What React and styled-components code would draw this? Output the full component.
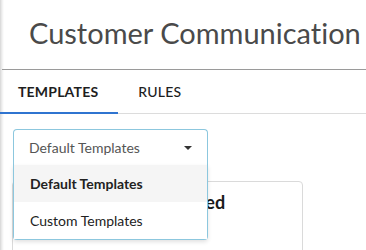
import React, { useState } from 'react';
import styled, { createGlobalStyle } from 'styled-components';

const GlobalStyle = createGlobalStyle`
	html, body {
		margin: 0;
		padding: 0;
		background: #fff;
		font-family: Lato, "Open Sans", sans-serif;
		font-variant-ligatures: none;
		overflow: hidden;
	}
`

const Page = styled.div`
	height: 250px;
	background: linear-gradient(to right, #d6d6d6 0px, #efefef 2px, #fff 4px);
	overflow: hidden;
`

const Header = styled.div`
	height: 69px;
	padding-left: 27px;
	border-bottom: 1px solid #9a9a9a;
	display: flex;
	align-items: center;
	margin-left: 2px;
`

const Title = styled.h1`
	margin: 0 0 4px 0;
	font-size: 29px;
	font-weight: 400;
	color: #4a4a4a;
	white-space: nowrap;
`

const TabBar = styled.div`
	display: flex;
	border-bottom: 1px solid #dcdcdc;
`

const Tab = styled.div`
	height: 42px;
	padding: 0 20px 0 18px;
	display: flex;
	align-items: center;
	font-size: 14px;
	font-weight: ${p => (p.$active ? 700 : 500)};
	color: #1e1e1e;
	letter-spacing: 0.2px;
	border-bottom: 2px solid ${p => (p.$active ? '#2f74d0' : 'transparent')};
	margin-bottom: -1px;
	& + & {
		padding-left: 20px;
	}
`

const Content = styled.div`
	padding: 15px 12px 0 12px;
`

const SelectWrap = styled.div`
	position: relative;
	width: 195px;
	margin-left: 1px;
	z-index: 2;
`

const SelectBox = styled.div`
	height: 36px;
	box-sizing: border-box;
	border: 1px solid #8cc7de;
	border-bottom: none;
	border-radius: 4px 4px 0 0;
	background: #fff;
	display: flex;
	align-items: center;
	justify-content: space-between;
	padding: 0 15px 0 15px;
	font-size: 14px;
	color: #555;
`

const Caret = styled.span`
	width: 0;
	height: 0;
	border-left: 4px solid transparent;
	border-right: 4px solid transparent;
	border-top: 4px solid #333;
	margin-top: 1px;
`

const Menu = styled.div`
	position: absolute;
	top: 100%;
	left: 0;
	right: 0;
	background: #fff;
	border: 1px solid #8cc7de;
	border-top: none;
	border-radius: 0 0 4px 4px;
	box-shadow: 0 2px 4px rgba(0, 0, 0, 0.12);
`

const MenuItem = styled.div`
	height: 37px;
	display: flex;
	align-items: center;
	padding-left: 16px;
	font-size: 14px;
	font-weight: ${p => (p.$selected ? 700 : 400)};
	color: #222;
	background: ${p => (p.$selected ? '#f5f5f5' : '#fff')};
`

const Card = styled.div`
	margin-top: 16px;
	width: 291px;
	height: 120px;
	box-sizing: border-box;
	border: 1px solid #dadada;
	border-radius: 4px;
	padding: 9px 16px;
`

const CardTitle = styled.h2`
	margin: 0;
	font-size: 18px;
	font-weight: 700;
	color: #1a1a1a;
	white-space: nowrap;
	letter-spacing: 0.15px;
`

const App = () => {
	const [tab] = useState('templates');
	const options = ['Default Templates', 'Custom Templates'];
	const [value] = useState(options[0]);

	return (
		<Page>
			<GlobalStyle />
			<Header>
				<Title>Customer Communication</Title>
			</Header>
			<TabBar>
				<Tab $active={tab === 'templates'}>TEMPLATES</Tab>
				<Tab $active={tab === 'rules'}>RULES</Tab>
			</TabBar>
			<Content>
				<SelectWrap>
					<SelectBox>
						<span>{value}</span>
						<Caret />
					</SelectBox>
					<Menu>
						{options.map(o => (
							<MenuItem key={o} $selected={o === value}>{o}</MenuItem>
						))}
					</Menu>
				</SelectWrap>
				<Card>
					<CardTitle>Appointment Scheduled</CardTitle>
				</Card>
			</Content>
		</Page>
	);
};

export default App;
